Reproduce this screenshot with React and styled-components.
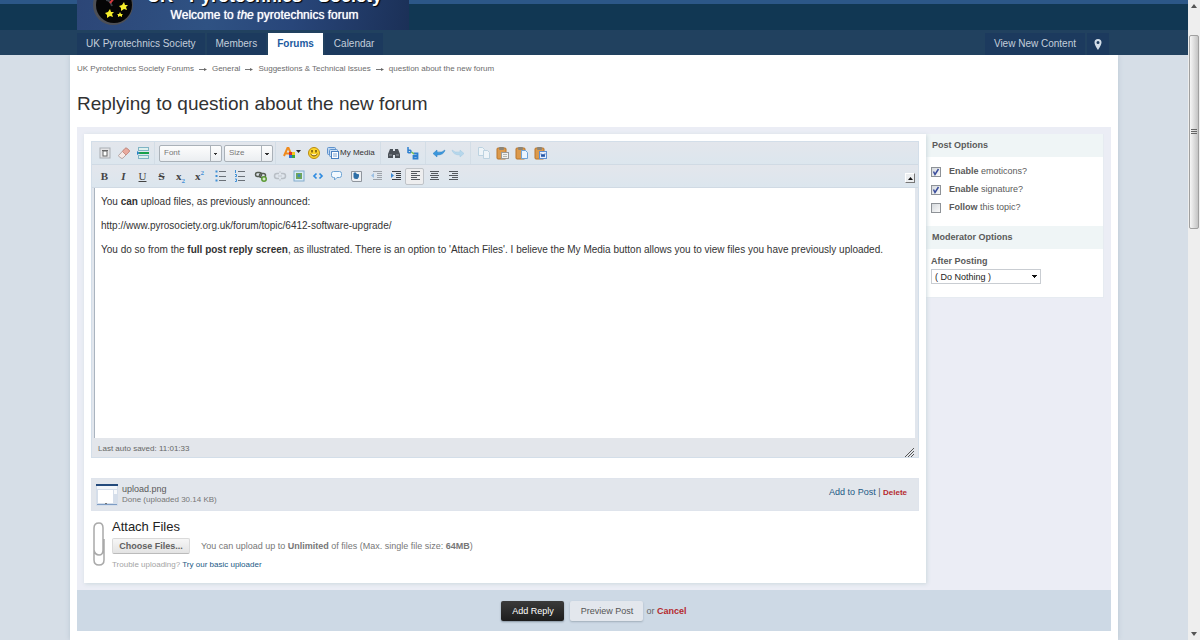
import React, { useState } from 'react'
import styled, { createGlobalStyle } from 'styled-components'

function Icon({ children, w = 14, h = 14 }) {
    return (
        <svg width={w} height={h} viewBox={`0 0 ${w} ${h}`} fill='none' aria-hidden='true'>
            {children}
        </svg>
    )
}

const Clipboard = ({ children }) => (
    <Icon>
        <rect x='1' y='2' width='9' height='11' rx='1' fill='#dc9a4c' stroke='#b8742a' />
        <rect x='3' y='1' width='5' height='3' rx='1' fill='#8d8577' />
        {children}
    </Icon>
)

const SourceIcon = () => (
    <Icon>
        <rect x='2' y='2' width='10' height='10' fill='#e4e4e6' stroke='#a9adb3' />
        <rect x='5' y='5' width='4' height='5' fill='#fff' stroke='#666' />
        <path d='M4 4.500h6' stroke='#666' />
    </Icon>
)
const EraserIcon = () => (
    <Icon>
        <path d='M1.500 9.500 8 2.500q1-1 2 0l2 1.500q1 1 0 2L6 12q-1 1-2 0l-2-1.500q-1-.5-.5-1z' fill='#f7e9e6' stroke='#b5a6a4' />
        <path d='M5.500 5.500 8 2.500q1-1 2 0l2 1.500q1 1 0 2L9 9z' fill='#e9aa9e' stroke='#c98f85' />
    </Icon>
)
const PageBreakIcon = () => (
    <Icon>
        <rect x='2.500' y='1.500' width='10' height='3' fill='#dff1ee' stroke='#7fb4c4' />
        <path d='M3 7h10' stroke='#18a14b' strokeWidth='2' />
        <path d='M1 5v4l3-2z' fill='#2b83c4' />
        <rect x='2.500' y='9.500' width='10' height='3' fill='#dff1ee' stroke='#7fb4c4' />
    </Icon>
)
const ColorIcon = () => (
    <Icon w={18}>
        <path d='M1 10 4.500 2h1L9 10M3 7.500h4' stroke='#f08a1c' strokeWidth='2' />
        <rect x='6' y='6' width='3' height='3' fill='#d9302c' />
        <rect x='9' y='6' width='3' height='3' fill='#f5c71a' />
        <rect x='6' y='9' width='3' height='3' fill='#2b72d6' />
        <rect x='9' y='9' width='3' height='3' fill='#3aa63c' />
        <path d='M13 4h5l-2.500 3z' fill='#222' />
    </Icon>
)
const SmileIcon = () => (
    <Icon>
        <circle cx='7' cy='7' r='5.500' fill='#fcd52c' stroke='#b98a12' />
        <path d='M5 4v2.500M9 4v2.500' stroke='#5a3d05' strokeWidth='1.300' />
        <path d='M3.500 8q3.500 4 7 0' stroke='#6b4606' fill='#fff3b5' />
    </Icon>
)
const MediaIcon = () => (
    <Icon>
        <rect x='1.500' y='1.500' width='8' height='7' rx='1' fill='#bfd8f3' stroke='#5f92cc' />
        <rect x='3.500' y='3.500' width='8' height='7' rx='1' fill='#cfe2f6' stroke='#5f92cc' />
        <rect x='5.500' y='5.500' width='7' height='7' fill='#fff' stroke='#4a80c0' />
        <path d='M7 8h4M7 10h4' stroke='#7aa3d3' />
    </Icon>
)
const FindIcon = () => (
    <Icon>
        <path d='M3 3h3v2h2V3h3l2 5v4H8V9H6v3H1V8z' fill='#4b5158' />
        <path d='M2 9h3M9 9h3' stroke='#93999f' />
    </Icon>
)
const ReplaceIcon = () => (
    <Icon>
        <path d='M2 1v6M2 4.500q3-1 3 1T2 6.500' stroke='#2d7fd0' strokeWidth='1.500' />
        <path d='M7.500 7.500h4v5h-4v-2.500h4' stroke='#2d7fd0' strokeWidth='1.800' />
        <path d='M5.500 6 8 8' stroke='#7cc04a' strokeWidth='1.500' />
    </Icon>
)
const UndoIcon = () => (
    <Icon>
        <path d='M1 7.500 5 4v2q5 1 8-2-1 5-8 5v2z' fill='#3b97dc' stroke='#2a7fc0' strokeWidth='.5' />
    </Icon>
)
const RedoIcon = () => (
    <Icon>
        <path d='M13 7.500 9 4v2Q4 7 1 4q1 5 8 5v2z' fill='#b6d7ec' stroke='#a3c8e0' strokeWidth='.5' />
    </Icon>
)
const CopyIcon = () => (
    <Icon>
        <path d='M1.500 1.500h4l2 2v6h-6z' fill='#eef4f8' stroke='#bcd2e0' />
        <path d='M6.500 4.500h4l2 2v6h-6z' fill='#eef4f8' stroke='#bcd2e0' />
    </Icon>
)
const PasteIcon = () => (
    <Clipboard>
        <rect x='5.500' y='6.500' width='7' height='6' fill='#f1f1ee' stroke='#999' />
        <path d='M7 8.500h4M7 10.500h4' stroke='#b5b5b0' />
    </Clipboard>
)
const PasteTextIcon = () => (
    <Clipboard>
        <path d='M6.500 4.500h4l2 2v6h-6z' fill='#eaf4ff' stroke='#6fa3d8' />
    </Clipboard>
)
const PasteWordIcon = () => (
    <Clipboard>
        <rect x='5.500' y='5.500' width='7' height='7' fill='#e8f0ff' stroke='#5f8fd0' />
        <path d='M7 7.500 8 11l1-3 1 3 1-3.500' stroke='#2457a8' />
    </Clipboard>
)
const ListIcon = ({ ordered }) => (
    <Icon>
        {ordered ? (
            <path d='M2.500 1v3M2 5.500h1.500v2H2M2 10h1.500v2.500H2' stroke='#3f8fd6' />
        ) : (
            <path d='M1.500 2.500h2M1.500 7h2M1.500 11.500h2' stroke='#3f8fd6' strokeWidth='2' />
        )}
        <path d='M5 2.500h7M5 7.500h7M5 11.500h7' stroke='#6b7178' />
    </Icon>
)
const LinkIcon = () => (
    <Icon>
        <rect x='1.500' y='3.500' width='6' height='4' rx='2' stroke='#555c52' strokeWidth='1.500' />
        <rect x='5.500' y='4.500' width='6' height='4' rx='2' stroke='#555c52' strokeWidth='1.500' />
        <circle cx='10' cy='10' r='3' fill='#5b9a35' />
        <path d='M10 8.500v3M8.500 10h3' stroke='#fff' />
    </Icon>
)
const UnlinkIcon = () => (
    <Icon>
        <path d='M6 4.500H4q-2.500 0-2.500 2.500T4 9.500h2M8 4.500h2q2.500 0 2.500 2.500T10 9.500H8' stroke='#b9bfc6' strokeWidth='1.500' />
        <path d='M5 7h4M7 2v2M7 10v2' stroke='#c3c8ce' />
    </Icon>
)
const ImageIcon = () => (
    <Icon>
        <rect x='2' y='2' width='10' height='10' fill='#d9ebf7' stroke='#82abcc' />
        <rect x='4' y='4' width='6' height='6' fill='#6fa65a' />
        <circle cx='7' cy='6.500' r='1.500' fill='#3f8ac2' />
    </Icon>
)
const CodeIcon = () => (
    <Icon>
        <path d='M5.500 4.500 3 7l2.500 2.500M8.500 4.500 11 7 8.500 9.500' stroke='#2f8be0' strokeWidth='1.700' />
    </Icon>
)
const QuoteIcon = () => (
    <Icon>
        <path d='M3.500 2.500h6q2 0 2 2v2q0 2-2 2H7L4.500 11V8.500h-1q-2 0-2-2v-2q0-2 2-2z' fill='#f2f9ff' stroke='#6ea4d4' />
    </Icon>
)
const TweetIcon = () => (
    <Icon>
        <path d='M2.500 2.500h10v10h-9l-1-2z' fill='#eef0f3' stroke='#8f959d' />
        <path d='M5 4h2v1.500h2.500v2L8.500 9.500H6.500Q5 9.500 5 8z' fill='#2f6fa6' stroke='#2f6fa6' />
    </Icon>
)
const IndentIcon = ({ out }) => (
    <Icon>
        <g opacity={out ? 0.4 : 1}>
            <path d='M3 2.500h9M7 4.500h5M7 6.500h5M7 8.500h5M3 10.500h9' stroke='#3a3f45' />
            <path d={out ? 'M1 6.500 4 4v5z' : 'M5 6.500 2 4v5z'} fill='#3a8ad6' />
        </g>
    </Icon>
)
const AlignIcon = ({ d }) => (
    <Icon>
        <path d={d} stroke='#55595e' />
    </Icon>
)

const formatRow = [
    [
        ['Bold', <Glyph b>B</Glyph>],
        ['Italic', <Glyph b i>I</Glyph>],
        ['Underline', <Glyph u>U</Glyph>],
        ['Strike', <Glyph b s>S</Glyph>],
        ['Subscript', <Glyph b>x<sub>2</sub></Glyph>],
        ['Superscript', <Glyph b>x<sup>2</sup></Glyph>],
    ],
    [
        ['Bulleted list', <ListIcon />],
        ['Numbered list', <ListIcon ordered />],
    ],
    [
        ['Link', <LinkIcon />],
        ['Unlink', <UnlinkIcon />],
        ['Image', <ImageIcon />],
        ['Code', <CodeIcon />],
        ['Quote', <QuoteIcon />],
        ['Twitter', <TweetIcon />],
    ],
    [
        ['Outdent', <IndentIcon out />],
        ['Indent', <IndentIcon />],
        ['Align left', <AlignIcon d='M3 2.500h9M3 4.500h6M3 6.500h9M3 8.500h6M3 10.500h9' />],
        ['Align center', <AlignIcon d='M3 2.500h9M4 4.500h7M3 6.500h9M4 8.500h7M3 10.500h9' />],
        ['Align right', <AlignIcon d='M3 2.500h9M6 4.500h6M3 6.500h9M6 8.500h6M3 10.500h9' />],
    ],
]

function Glyph({ b, i, u, s, children }) {
    return <GlyphText $b={b} $i={i} $u={u} $s={s}>{children}</GlyphText>
}

function Header() {
    return (
        <>
            <Strip />
            <Branding>
                <Logo>
                    <Badge width='60' height='30' viewBox='0 0 60 30' aria-hidden='true'>
                        <circle cx='36' cy='5' r='20' fill='#4d4f55' />
                        <circle cx='37' cy='5' r='18' fill='#050505' />
                        <path d='M29 0q4 0 6 6' stroke='#3d4046' strokeWidth='2' fill='none' />
                        <path d='M33 3 38-3' stroke='#d4393f' strokeWidth='2' />
                        <g fill='#f6ee2c'>
                            <path d='m47 2 1 3 3 0-2 2 1 3-3-1-3 2 0-3-2-2 3-1z' />
                            <path d='m33 9 1 3 3 0-2 2 1 3-3-1-3 2 0-3-2-2 3-1z' />
                            <path d='m43 12 1 2 2 0-1 1 0 2-2-1-2 1 0-2-1-1 2 0z' />
                        </g>
                    </Badge>
                    <LogoText>
                        <LogoName><span>UK</span><span>Pyrotechnics</span><span>Society</span></LogoName>
                        <Tagline>Welcome to <i>the</i> pyrotechnics forum</Tagline>
                    </LogoText>
                </Logo>
            </Branding>
            <Nav>
                <Tab href='#'>UK Pyrotechnics Society</Tab>
                <Tab href='#'>Members</Tab>
                <Tab href='#' $active>Forums</Tab>
                <Tab href='#'>Calendar</Tab>
                <Spacer />
                <Tab href='#'>View New Content</Tab>
                <Tab href='#' $small aria-label='Navigation'>
                    <svg width='8' height='11' viewBox='0 0 8 11'>
                        <path fillRule='evenodd' d='M4 0a3.500 3.500 0 0 0-3.500 3.500C.5 6 4 11 4 11s3.500-5 3.500-7.500A3.500 3.500 0 0 0 4 0zm0 2a1.500 1.500 0 1 1 0 3 1.500 1.500 0 0 1 0-3z' fill='#d3dde8' />
                    </svg>
                </Tab>
            </Nav>
        </>
    )
}

function Toolbar() {
    return (
        <>
            <ToolRow>
                <Group>
                    <Tool aria-label='Source'><SourceIcon /></Tool>
                    <Tool aria-label='Remove format'><EraserIcon /></Tool>
                    <Tool aria-label='Page break'><PageBreakIcon /></Tool>
                </Group>
                <Group $line $gap>
                    <Combo aria-label='Font' $w={63}><option>Font</option></Combo>
                    <Combo aria-label='Size' $w={49}><option>Size</option></Combo>
                </Group>
                <Group $line>
                    <Tool aria-label='Text color' $wide><ColorIcon /></Tool>
                    <Tool aria-label='Emoticons'><SmileIcon /></Tool>
                    <Tool $wide><MediaIcon />My Media</Tool>
                </Group>
                <Group $line>
                    <Tool aria-label='Find'><FindIcon /></Tool>
                    <Tool aria-label='Replace'><ReplaceIcon /></Tool>
                </Group>
                <Group $line>
                    <Tool aria-label='Undo'><UndoIcon /></Tool>
                    <Tool aria-label='Redo'><RedoIcon /></Tool>
                </Group>
                <Group $line>
                    <Tool aria-label='Copy'><CopyIcon /></Tool>
                    <Tool aria-label='Paste'><PasteIcon /></Tool>
                    <Tool aria-label='Paste as text'><PasteTextIcon /></Tool>
                    <Tool aria-label='Paste from Word'><PasteWordIcon /></Tool>
                </Group>
            </ToolRow>
            <ToolRow>
                {formatRow.map((group, n) => (
                    <Group key={n}>
                        {group.map(([label, icon]) => (
                            <Tool key={label} aria-label={label} $on={label === 'Align left'}>{icon}</Tool>
                        ))}
                    </Group>
                ))}
                <Spacer />
                <Collapse aria-label='Collapse toolbar'>
                    <svg width='5' height='3' viewBox='0 0 5 3'><path d='M0 3 2.500 0 5 3z' fill='#111' /></svg>
                </Collapse>
            </ToolRow>
        </>
    )
}

function Uploader() {
    return (
        <>
            <FileRow>
                <svg width='22' height='22' viewBox='0 0 22 22' aria-hidden='true'>
                    <path d='M0 0h22v22H0z' fill='#d5deea' />
                    <path d='M0 0h22v2H0z' fill='#234a7c' />
                    <path d='M1 2h20v3H1z' fill='#f2f5f9' />
                    <path d='M2 6h15v13H2z' fill='#fff' />
                    <path d='M18 6h3v4h-3z' fill='#f7f9fb' />
                    <path d='M1 20h20v1H1z' fill='#7d9cc4' />
                    <path d='M9 19h2v1H9z' fill='#777' />
                </svg>
                <FileInfo>
                    <FileName>upload.png</FileName>
                    <FileStatus>Done (uploaded 30.14 KB)</FileStatus>
                </FileInfo>
                <Spacer />
                <FileActions>
                    <Link href='#'>Add to Post</Link> | <Danger href='#' $small>Delete</Danger>
                </FileActions>
            </FileRow>
            <Attach>
                <svg width='14' height='46' viewBox='0 0 14 46' fill='none' aria-hidden='true'>
                    <path d='M2 18V7q0-5 5-5 4 0 4 5v22q0 5-4 5-4 0-5-5V16M2 29v10q0 5 5 5t5-5V18' stroke='#a9a9a9' strokeWidth='1.500' />
                </svg>
                <div>
                    <AttachTitle>Attach Files</AttachTitle>
                    <AttachRow>
                        <Choose>Choose Files...</Choose>
                        <span>You can upload up to <b>Unlimited</b> of files (Max. single file size: <b>64MB</b>)</span>
                    </AttachRow>
                    <Trouble>Trouble uploading? <Link href='#'>Try our basic uploader</Link></Trouble>
                </div>
            </Attach>
        </>
    )
}

function Sidebar() {
    const [options, setOptions] = useState({ emoticons: true, signature: true, follow: false })
    const toggle = (e) => setOptions({ ...options, [e.target.name]: e.target.checked })

    return (
        <SideContainer>
            <SideTitle>Post Options</SideTitle>
            <Options>
                <Option>
                    <Check name='emoticons' checked={options.emoticons} onChange={toggle} />
                    <span><b>Enable</b> emoticons?</span>
                </Option>
                <Option>
                    <Check name='signature' checked={options.signature} onChange={toggle} />
                    <span><b>Enable</b> signature?</span>
                </Option>
                <Option>
                    <Check name='follow' checked={options.follow} onChange={toggle} />
                    <span><b>Follow</b> this topic?</span>
                </Option>
            </Options>
            <SideTitle>Moderator Options</SideTitle>
            <AfterPosting>
                <AfterLabel htmlFor='after'>After Posting</AfterLabel>
                <AfterSelect id='after'><option>( Do Nothing )</option></AfterSelect>
            </AfterPosting>
        </SideContainer>
    )
}

function App() {
    return (
        <Screen>
            <GlobalStyle />
            <Main>
                <Header />
                <Page>
                    <Crumbs aria-label='Breadcrumb'>
                        <a href='#'>UK Pyrotechnics Society Forums</a><Arrow />
                        <a href='#'>General</a><Arrow />
                        <a href='#'>Suggestions &amp; Technical Issues</a><Arrow />
                        <a href='#'>question about the new forum</a>
                    </Crumbs>
                    <Title>Replying to question about the new forum</Title>
                    <Form>
                        <Card>
                            <Editor>
                                <Toolbar />
                                <Content role='textbox' aria-label='Post' contentEditable suppressContentEditableWarning spellCheck={false}>
                                    <p>You <b>can</b> upload files, as previously announced:</p>
                                    <p>http://www.pyrosociety.org.uk/forum/topic/6412-software-upgrade/</p>
                                    <p>You do so from the <b>full post reply screen</b>, as illustrated. There is an option to 'Attach Files'. I believe the My Media button allows you to view files you have previously uploaded.</p>
                                </Content>
                                <Status>
                                    <span>Last auto saved: 11:01:33</span>
                                    <svg width='10' height='10' viewBox='0 0 10 10' aria-hidden='true'>
                                        <path d='M1 10 10 1M4 10l6-6M7 10l3-3' stroke='#555' fill='none' />
                                    </svg>
                                </Status>
                            </Editor>
                            <Uploader />
                        </Card>
                        <Sidebar />
                    </Form>
                    <Submit>
                        <Primary>Add Reply</Primary>
                        <Secondary>Preview Post</Secondary>
                        <span>or <Danger href='#'>Cancel</Danger></span>
                    </Submit>
                </Page>
            </Main>
            <Scrollbar aria-hidden='true'>
                <svg width='6' height='4' viewBox='0 0 6 4'><path d='M0 4 3 0l3 4z' fill='#555' /></svg>
                <Thumb><svg width='6' height='6' viewBox='0 0 6 6'><path d='M0 .5h6M0 2.500h6M0 4.500h6' stroke='#666' /></svg></Thumb>
                <Spacer />
                <svg width='6' height='4' viewBox='0 0 6 4'><path d='M0 0l3 4 3-4z' fill='#555' /></svg>
            </Scrollbar>
        </Screen>
    )
}

function Check(props) {
    return (
        <CheckWrap>
            <CheckInput type='checkbox' {...props} />
            {props.checked && (
                <CheckMark width='10' height='10' viewBox='0 0 10 10'>
                    <path d='M2.500 4.500 4 7.500 7.500 2' stroke='#3a4c9c' strokeWidth='1.500' fill='none' />
                </CheckMark>
            )}
        </CheckWrap>
    )
}

function Arrow() {
    return (
        <svg width='8' height='5' viewBox='0 0 8 5' aria-hidden='true'>
            <path d='M0 2.500h6' stroke='#777' />
            <path d='M5 1l3 1.500L5 4z' fill='#666' />
        </svg>
    )
}

export default App

const GlobalStyle = createGlobalStyle`
    * {
        box-sizing: border-box;
    }
    body {
        margin: 0;
        overflow: hidden;
        background: #d6dee7;
        color: #5a5a5a;
        font: 9px/12px "Liberation Sans", Arial, sans-serif;
    }
    button, select, input {
        font: inherit;
        color: inherit;
        margin: 0;
        padding: 0;
        border: 0;
        background: none;
    }
    a {
        color: inherit;
        text-decoration: none;
    }
    svg {
        flex: none;
    }
`
const Screen = styled.div`
    display: flex;
    height: 100vh;
    overflow: hidden;
`
const Main = styled.div`
    flex: 1;
    min-width: 0;
    display: flex;
    flex-direction: column;
`
const Spacer = styled.div`
    flex: 1;
`
const Strip = styled.div`
    flex: none;
    height: 4px;
    background: #2c5788;
`
const Branding = styled.div`
    flex: none;
    height: 26px;
    padding: 0 77px;
    background: #113753;
`
const Logo = styled.div`
    display: flex;
    width: 332px;
    height: 30px;
    margin-top: -4px;
    overflow: hidden;
    background: linear-gradient(100deg, #2c4677 0%, #2f5283 40%, #28467a 65%, #1b3057 100%);
`
const Badge = styled.svg`
    margin-right: 10px;
`
const LogoText = styled.div`
    display: flex;
    flex-direction: column;
    align-items: center;
    margin-top: -15px;
    color: #fff;
`
const LogoName = styled.div`
    display: flex;
    gap: 16px;
    font-size: 18px;
    line-height: 22px;
    font-weight: bold;
    text-shadow: 1px 1px 1px #000;
`
const Tagline = styled.div`
    font-size: 12px;
    line-height: 16px;
    text-shadow: 0 0 1px #fff;
`
const Nav = styled.nav`
    flex: none;
    display: flex;
    align-items: flex-end;
    gap: 2px;
    height: 25px;
    padding: 0 79px 0 77px;
    background: #21415f;
`
const Tab = styled.a`
    display: flex;
    align-items: center;
    height: 22px;
    padding: 0 ${props => props.$small ? '7px' : '9px'};
    font-size: 10px;
    color: ${props => props.$active ? '#1d5aa0' : '#c3cedb'};
    background: ${props => props.$active ? '#fff' : '#1c3a5e'};
    font-weight: ${props => props.$active ? 'bold' : 'normal'};
`
const Page = styled.main`
    flex: 1;
    margin: 0 70px;
    padding: 0 7px;
    background: #fff;
    box-shadow: 0 0 5px #b9c6d2;
    clip-path: inset(0 -6px);
`
const Crumbs = styled.nav`
    display: flex;
    align-items: center;
    gap: 5px;
    padding-top: 9px;
    font-size: 8px;
    line-height: 10px;
    color: #6c6c6c;
`
const Title = styled.h1`
    margin: 18px 0 11px;
    font-size: 19px;
    line-height: 24px;
    font-weight: normal;
    color: #323232;
`
const Form = styled.div`
    display: flex;
    align-items: flex-start;
    padding: 7px;
    background: #ebedf5;
`
const Card = styled.section`
    position: relative;
    flex: 1;
    min-width: 0;
    padding: 7px;
    background: #fff;
    box-shadow: 1px 1px 4px #ccd8dd;
`
const Editor = styled.div`
    border: 1px solid #d3dee9;
    background: #e1e6ed;
    margin-bottom: 20px;
`
const ToolRow = styled.div`
    display: flex;
    align-items: center;
    gap: 2px;
    height: 23px;
    padding: 0 3px;
    background: linear-gradient(#e3e6ec, #dce6ee);
    border-bottom: 1px solid #d0dae4;
`
const Group = styled.div`
    display: flex;
    align-items: center;
    gap: ${props => props.$gap ? '2px' : '0'};
    ${props => props.$line && `
        height: 22px;
        padding-left: 4px;
        border-left: 1px solid #d3dde6;
    `}
`
const Tool = styled.button`
    display: flex;
    align-items: center;
    justify-content: center;
    height: 17px;
    min-width: 19px;
    padding: 0 ${props => props.$wide ? '3px' : '0'};
    font-size: 8px;
    color: #333;
    border-radius: 2px;
    border: ${props => props.$on ? '1px solid #bfc3c8' : '0'};
    background: ${props => props.$on ? '#eeeeef' : 'none'};
`
const GlyphText = styled.span`
    font: 11px/14px "Liberation Serif", "Times New Roman", serif;
    color: #444;
    font-weight: ${props => props.$b ? 'bold' : 'normal'};
    font-style: ${props => props.$i ? 'italic' : 'normal'};
    text-decoration: ${props => props.$u ? 'underline' : props.$s ? 'line-through' : 'none'};
    sub, sup {
        font-size: 7px;
        line-height: 0;
        color: #3f8fd6;
    }
`
const Combo = styled.select`
    appearance: none;
    width: ${props => props.$w}px;
    height: 17px;
    padding-left: 4px;
    font-size: 8px;
    color: #777;
    border: 1px solid #aab1b8;
    border-radius: 2px;
    background:
        conic-gradient(from -45deg at 50% 100%, #333 90deg, transparent 0) right 3px top 7px / 4px 2px no-repeat,
        linear-gradient(#aab1b8, #aab1b8) right 10px top 0 / 1px 100% no-repeat,
        linear-gradient(#fdfdfd, #ebeef1);
`
const Collapse = styled.button`
    display: flex;
    align-items: center;
    justify-content: center;
    align-self: flex-end;
    width: 10px;
    height: 10px;
    margin-bottom: 4px;
    background: #eceef0;
    border: 1px solid;
    border-color: #fff #777 #777 #fff;
`
const Content = styled.div`
    min-height: 250px;
    margin: 0 3px 0 2px;
    padding: 8px 6px;
    border-left: 1px solid #aab4bf;
    background: #fff;
    font-size: 10px;
    color: #333;
    outline: none;
    p {
        margin: 0 0 12px;
    }
`
const Status = styled.div`
    display: flex;
    align-items: center;
    justify-content: space-between;
    height: 19px;
    padding: 2px 4px 0 6px;
    font-size: 8px;
    color: #666;
    background: #e3e6eb;
    svg {
        align-self: flex-end;
    }
`
const FileRow = styled.div`
    display: flex;
    align-items: center;
    gap: 4px;
    height: 33px;
    padding: 0 11px 0 4px;
    border: 1px solid #dfe4ec;
    background: #e2e6ec;
`
const FileInfo = styled.div`
    display: flex;
    flex-direction: column;
    margin-bottom: 2px;
`
const FileName = styled.span`
    line-height: 12px;
`
const FileStatus = styled.span`
    font-size: 8px;
    line-height: 9px;
    color: #777;
`
const FileActions = styled.div`
    margin-bottom: 4px;
`
const Link = styled.a`
    color: #225985;
`
const Danger = styled.a`
    color: #b52a2e;
    font-weight: bold;
    font-size: ${props => props.$small ? '8px' : '9px'};
`
const Attach = styled.div`
    display: flex;
    gap: 6px;
    padding: 8px 0 6px 1px;
    > svg {
        margin-top: 2px;
    }
`
const AttachTitle = styled.h3`
    margin: 0;
    font-size: 13px;
    line-height: 16px;
    font-weight: normal;
    color: #222;
`
const AttachRow = styled.div`
    display: flex;
    align-items: center;
    gap: 11px;
    margin: 3px 0 6px;
    color: #777;
`
const Choose = styled.button`
    width: 78px;
    height: 16px;
    font-weight: bold;
    color: #616161;
    background: linear-gradient(#f6f6f6, #e3e3e3);
    border: 1px solid #dadada;
    border-bottom-color: #bbb;
    border-radius: 2px;
`
const Trouble = styled.div`
    font-size: 8px;
    line-height: 10px;
    color: #a4a4a4;
`
const SideContainer = styled.aside`
    width: 178px;
    background: #fff;
    border: 1px solid #e6ebf1;
    border-width: 0 1px 1px 0;
`
const SideTitle = styled.h3`
    margin: 0;
    padding: 0 6px;
    font-size: 9px;
    line-height: 23px;
    color: #5a5a5a;
    background: #eff5f6;
`
const Options = styled.div`
    display: flex;
    flex-direction: column;
    gap: 6px;
    padding: 8px 5px 13px;
`
const Option = styled.label`
    display: flex;
    gap: 8px;
    height: 12px;
`
const CheckWrap = styled.span`
    position: relative;
    width: 10px;
    height: 10px;
    margin-top: 2px;
`
const CheckInput = styled.input`
    appearance: none;
    display: block;
    width: 10px;
    height: 10px;
    border: 1px solid #8e9297;
    background: linear-gradient(135deg, #d5d9dd, #fafafa);
`
const CheckMark = styled.svg`
    position: absolute;
    top: 0;
    left: 0;
    pointer-events: none;
`
const AfterPosting = styled.div`
    display: flex;
    flex-direction: column;
    align-items: flex-start;
    gap: 2px;
    padding: 6px 5px 13px;
`
const AfterLabel = styled.label`
    font-weight: bold;
`
const AfterSelect = styled.select`
    appearance: none;
    width: 110px;
    height: 15px;
    padding-left: 3px;
    color: #222;
    border: 1px solid #c9cdd2;
    background:
        conic-gradient(from -45deg at 50% 100%, #111 90deg, transparent 0) right 3px top 5px / 5px 3px no-repeat,
        #fff;
`
const Submit = styled.div`
    display: flex;
    align-items: center;
    justify-content: center;
    height: 41px;
    background: #cdd9e5;
    color: #666;
    > span {
        margin-left: 3px;
    }
`
const Primary = styled.button`
    height: 20px;
    width: 63px;
    margin-right: 6px;
    color: #fff;
    background: linear-gradient(#3b3b3b, #1d1d1d);
    border-radius: 2px;
    box-shadow: 0 1px 2px #8593a0;
`
const Secondary = styled.button`
    height: 20px;
    width: 73px;
    color: #555;
    background: #e3e7ed;
    border-radius: 2px;
    box-shadow: 0 1px 2px #9fadb9;
`
const Scrollbar = styled.div`
    flex: none;
    display: flex;
    flex-direction: column;
    align-items: center;
    width: 12px;
    padding: 4px 0;
    background: #eeeeee;
`
const Thumb = styled.div`
    display: flex;
    align-items: center;
    justify-content: center;
    width: 10px;
    height: 194px;
    margin-top: 27px;
    border: 1px solid #a0a0a0;
    border-radius: 2px;
    background: linear-gradient(90deg, #f6f6f6, #d8d8d8 60%, #c4c4c4);
`
